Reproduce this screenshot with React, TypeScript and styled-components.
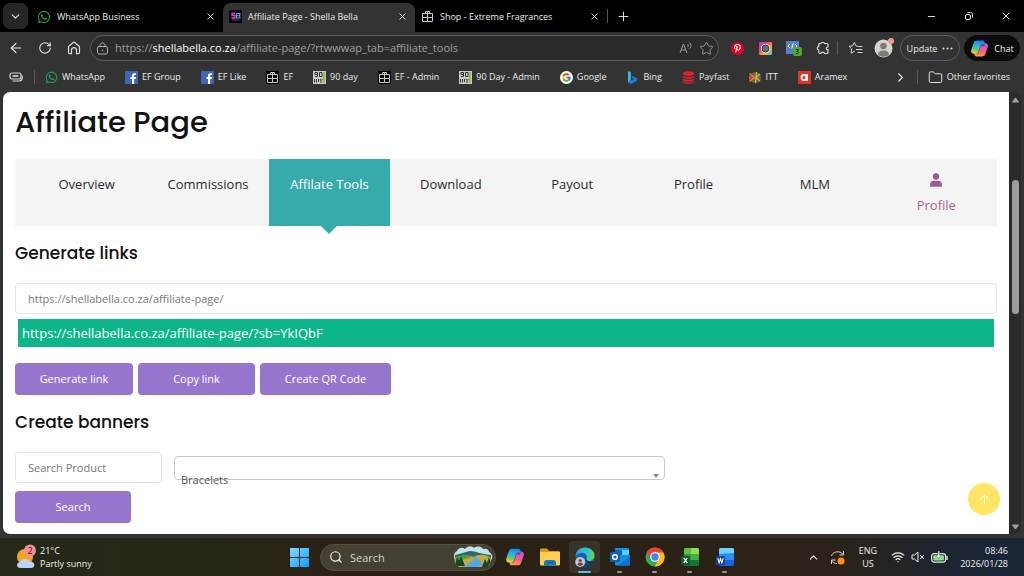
import React from 'react';
import styled, { createGlobalStyle, css } from 'styled-components';
import { FaWhatsapp, FaPinterestP } from 'react-icons/fa';
import { FcGoogle } from 'react-icons/fc';
import {
  ArrowLeft, ChevronDown, ChevronRight, ChevronUp, Minus, Plus,
  RotateCw, Search, Star, X, Folder, Wifi, ArrowUp,
} from 'lucide-react';

const ui = '"Open Sans", "Noto Sans", sans-serif';

const GlobalStyle = createGlobalStyle`
  * { box-sizing: border-box; }
  body { margin: 0; background: #333; font-family: ${ui}; }
  button, input, select { font-family: inherit; margin: 0; }
  h1, h2, p { margin: 0; }
  svg { display: block; flex: none; }
`;

/* ---------- browser chrome ---------- */

const Desktop = styled.div`
  min-height: 100vh;
  display: flex;
  flex-direction: column;
`;

const Browser = styled.div`
  flex: 1;
  display: flex;
  flex-direction: column;
  background: #333;
  color: #ececec;
  font-size: 9px;
`;

const IconButton = styled.button<{ $w?: number }>`
  display: flex;
  align-items: center;
  justify-content: center;
  flex: none;
  width: ${(p) => p.$w ?? 28}px;
  height: 26px;
  padding: 0;
  border: 0;
  background: none;
  color: inherit;
`;

const TabStrip = styled.div`
  display: flex;
  align-items: center;
  height: 32px;
  background: #000;
`;

const TabMenu = styled(IconButton)`
  margin: 0 3px;
  border-radius: 7px;
  background: #262626;
`;

const Tab = styled.div<{ $active?: boolean }>`
  display: flex;
  align-items: center;
  align-self: stretch;
  gap: 6px;
  width: 192px;
  margin-top: ${(p) => (p.$active ? 3 : 0)}px;
  padding: ${(p) => (p.$active ? 0 : 3)}px 0 2px 6px;
  border-radius: 8px 8px 0 0;
  background: ${(p) => (p.$active ? '#333' : 'transparent')};
`;

const TabTitle = styled.span`
  flex: 1;
  white-space: nowrap;
  line-height: 16px;
`;

const Spacer = styled.div`
  flex: 1;
`;

const Divider = styled.span<{ $before?: number }>`
  flex: none;
  width: 1px;
  height: 14px;
  margin-left: ${(p) => p.$before ?? 0}px;
  background: #5a5a5a;
`;

const Toolbar = styled.div`
  display: flex;
  align-items: center;
  height: 32px;
  padding: 0 4px 0 2px;
`;

const AddressBar = styled.div`
  flex: 1;
  display: flex;
  align-items: center;
  gap: 6px;
  height: 26px;
  margin-left: 2px;
  margin-right: 4px;
  padding: 0 4px 0 5px;
  border: 1px solid #5c5c5c;
  border-radius: 13px;
  background: #2b2b2b;
  color: #a0a0a0;
`;

const Url = styled.span`
  flex: 1;
  font-size: 11px;
  line-height: 16px;
  white-space: nowrap;
  b { font-weight: 400; color: #fff; }
`;

const Pill = styled.button<{ $dark?: boolean }>`
  display: flex;
  align-items: center;
  justify-content: center;
  gap: 5px;
  flex: none;
  width: ${(p) => (p.$dark ? 56 : 60)}px;
  height: 26px;
  margin-left: 4px;
  padding: 0;
  border: 1px solid ${(p) => (p.$dark ? '#0c0c0c' : '#5c5c5c')};
  border-radius: 13px;
  background: ${(p) => (p.$dark ? '#0c0c0c' : 'transparent')};
  color: #ececec;
  font-size: 9px;
`;

const Favorites = styled.nav`
  display: flex;
  align-items: center;
  height: 28px;
  padding: 0 14px 2px 9px;
`;

const FavoriteList = styled.div`
  display: flex;
  align-items: center;
  gap: 20px;
  margin-left: 10px;
`;

const Favorite = styled.a`
  display: flex;
  align-items: center;
  gap: 4px;
  color: inherit;
  text-decoration: none;
  white-space: nowrap;
  line-height: 16px;
`;

/* ---------- web page ---------- */

const Viewport = styled.div`
  flex: 1;
  display: flex;
  margin: 0 3px 4px;
  border-radius: 7px;
  overflow: hidden;
  background: #2b2b2b;
`;

const Page = styled.main`
  position: relative;
  flex: 1;
  padding: 9px 12px 11px;
  background: #fff;
  color: #111;
`;

const Scrollbar = styled.div`
  display: flex;
  flex-direction: column;
  align-items: center;
  width: 12px;
  padding: 5px 0 4px;
  color: #a0a0a0;
`;

const Thumb = styled.div`
  width: 7px;
  flex: 0 0 31%;
  margin: 77px 0 auto;
  border-radius: 4px;
  background: #9d9d9d;
`;

const Title = styled.h1`
  font: 500 29px/42px Poppins, Inter, sans-serif;
`;

const Heading = styled.h2`
  margin: 15px 0 18px;
  font: 500 17px/24px Poppins, Inter, sans-serif;
`;

const Menu = styled.nav`
  display: grid;
  grid-template-columns: repeat(8, 1fr);
  margin-top: 16px;
  padding-left: 11px;
  background: #f4f4f4;
`;

const MenuLink = styled.a<{ $active?: boolean; $accent?: boolean }>`
  position: relative;
  display: flex;
  flex-direction: column;
  align-items: center;
  height: 67px;
  padding-top: 15px;
  font-size: 13px;
  line-height: 20px;
  text-decoration: none;
  color: #2b2b2b;
  ${(p) => p.$accent && css`
    gap: 8px;
    padding-top: 14px;
    color: #a46497;
  `}
  ${(p) => p.$active && css`
    background: #37aaab;
    color: #fff;
    &::after {
      content: '';
      position: absolute;
      top: 100%;
      border: 8px solid transparent;
      border-top-color: #37aaab;
      border-bottom: 0;
    }
  `}
`;

const TextBox = styled.input<{ $short?: boolean }>`
  display: block;
  width: ${(p) => (p.$short ? '147px' : '100%')};
  height: 31px;
  padding: 0 12px 1px;
  border: 1px solid #e2e2e2;
  border-radius: 4px;
  background: #fff;
  color: #777;
  font-size: 11px;
  &::placeholder { color: #777; opacity: 1; }
`;

const LinkResult = styled.p`
  margin: 5px 3px 16px;
  padding: 0 4px;
  background: #0db688;
  color: #fff;
  font-size: 13px;
  line-height: 28px;
`;

const ButtonRow = styled.div`
  display: flex;
  gap: 5px;
`;

const Button = styled.button<{ $w: number }>`
  width: ${(p) => p.$w}px;
  height: 32px;
  padding: 0 0 2px;
  border: 0;
  border-radius: 4px;
  background: #9775ce;
  color: #fff;
  font-size: 11px;
`;

const FilterRow = styled.div`
  display: flex;
  align-items: center;
  gap: 12px;
  margin-bottom: 8px;
`;

const Picker = styled.div`
  position: relative;
  width: 50%;
  height: 24px;
  border: 1px solid #c8c8c8;
  border-radius: 4px;
  &::after {
    content: '';
    position: absolute;
    right: 5px;
    bottom: 1px;
    border: 3px solid transparent;
    border-top: 4px solid #888;
    border-bottom: 0;
  }
`;

const PickerSelect = styled.select`
  width: 100%;
  height: 30px;
  margin-top: 8px;
  padding: 0 6px;
  border: 0;
  appearance: none;
  background: transparent;
  color: #555;
  font-size: 11px;
`;

const ToTop = styled.button`
  position: absolute;
  right: 9px;
  bottom: 19px;
  display: flex;
  align-items: center;
  justify-content: center;
  width: 32px;
  height: 32px;
  padding: 0;
  border: 0;
  border-radius: 50%;
  background: #ffe565;
  color: #fff;
`;

/* ---------- taskbar ---------- */

const Taskbar = styled.footer`
  display: grid;
  grid-template-columns: 1fr auto 1fr;
  align-items: center;
  height: 38px;
  background: linear-gradient(90deg, #25291a 0%, #262616 22%, #2b2116 32%, #2a2216 72%, #2b231a 82%, #1b2534 94%, #1a2636 100%);
  color: #f0f0f0;
  font-size: 9px;
  line-height: 13px;
`;

const Group = styled.div<{ $end?: boolean }>`
  display: flex;
  align-items: center;
  gap: ${(p) => (p.$end ? 6 : 4)}px;
  padding: ${(p) => (p.$end ? '0 16px 0 0' : '0 0 0 16px')};
  justify-content: ${(p) => (p.$end ? 'flex-end' : 'flex-start')};
`;

const Apps = styled.div`
  display: flex;
  align-items: center;
`;

const Lines = styled.div<{ $align?: string; $w?: number }>`
  display: flex;
  flex-direction: column;
  width: ${(p) => (p.$w ? p.$w + 'px' : 'auto')};
  text-align: ${(p) => p.$align ?? 'left'};
  white-space: nowrap;
`;

const TrayButton = styled(IconButton)`
  margin-right: 3px;
`;

const AppButton = styled.button<{ $state?: 'open' | 'active' }>`
  position: relative;
  display: flex;
  align-items: center;
  justify-content: center;
  width: 31px;
  height: 32px;
  margin: 0 2px;
  padding: 0;
  border: 0;
  border-radius: 4px;
  background: ${(p) => (p.$state === 'active' ? '#3b3329' : 'transparent')};
  ${(p) => p.$state && css`
    &::after {
      content: '';
      position: absolute;
      bottom: 0;
      width: ${p.$state === 'active' ? 13 : 5}px;
      height: 2px;
      border-radius: 1px;
      background: ${p.$state === 'active' ? '#4cc2ff' : '#9a948b'};
    }
  `}
`;

const SearchBox = styled.label`
  display: flex;
  align-items: center;
  gap: 7px;
  width: 176px;
  height: 27px;
  margin: 0 1px 0 3px;
  padding: 0 2px 0 8px;
  border: 1px solid #55503f;
  border-radius: 14px;
  background: #454034;
  input {
    flex: 1;
    min-width: 0;
    padding: 0;
    border: 0;
    background: none;
    color: #d6d3cc;
    font-size: 11px;
  }
  input::placeholder { color: #d6d3cc; opacity: 1; }
`;

/* ---------- drawings ---------- */

const half = 'M9 2h7c1.300 0 2 .7 2.400 2l.6 2.500h-3c-1.500 0-2.300.9-2.800 2.400L11 15.500C10.400 17.300 9.300 18.500 7.400 18.500H4.300C2 18.500 1 16.500 1.500 14L4.500 5.500C5.200 3.300 6.500 2 9 2z';

const Copilot = ({ size, id }: { size: number; id: string }) => (
  <svg width={size} height={size} viewBox="0 0 24 24">
    <defs>
      <linearGradient id={`${id}a`} x1="0.6" y1="0" x2="0.300" y2="1">
        <stop offset="0" stopColor="#1f7cf0" /><stop offset=".4" stopColor="#22b5e0" />
        <stop offset=".7" stopColor="#5ecb6b" /><stop offset="1" stopColor="#f2d02c" />
      </linearGradient>
      <linearGradient id={`${id}b`} x1="0.4" y1="1" x2="0.7" y2="0">
        <stop offset="0" stopColor="#b45cf0" /><stop offset=".5" stopColor="#fb5a86" />
        <stop offset="1" stopColor="#ff9a3d" />
      </linearGradient>
    </defs>
    <path d={half} fill={`url(#${id}b)`} transform="rotate(180 12 12)" />
    <path d={half} fill={`url(#${id}a)`} />
    <path d="M16 6.500h3L18 9h-4l-3.500 9.500H7.400c1.900 0 3-1.200 3.600-3l2.200-6.600C13.700 7.400 14.500 6.500 16 6.500z" fill="#26262a" opacity=".55" />
  </svg>
);

const Facebook = () => (
  <svg width="13" height="13" viewBox="0 0 13 13">
    <rect width="13" height="13" fill="#4267b2" />
    <path d="M7 13V8H5.500V6H7V4.700C7 3 8 2.200 9.500 2.200h1.500v1.900h-1c-.7 0-.9.3-.9.9v1H11L10.700 8H9.100v5z" fill="#fff" />
  </svg>
);

const Gift = ({ dark }: { dark?: boolean }) => (
  <svg width="13" height="13" viewBox="0 0 13 13" fill="none" stroke="#c8c8c8">
    {dark && <rect width="13" height="13" fill="#000" stroke="none" />}
    <path d="M1.500 3.500h10v8h-10zM1.500 7.500h10M6.500 3.500v8" />
    <path d="M4.500 3.500v-2h4v2M6.500 1.500v2" />
  </svg>
);

const Ninety = () => (
  <svg width="13" height="13" viewBox="0 0 13 13">
    <rect width="13" height="13" fill="#c9ccc4" />
    <rect x="10" y="1" width="2" height="11" fill="#8cc152" />
    <g fill="none" stroke="#333">
      <path d="M2 5.500h2.500v-4H2v2h2M6.500 1.500H9v4H6.500z" />
      <path d="M1.500 8v3.500M3.500 8v3.500M5.500 8v3M7 8l1 1.500L9.500 8M8 9.500V12" />
    </g>
  </svg>
);

const Bing = () => (
  <svg width="13" height="13" viewBox="0 0 13 13">
    <path d="M2 0l2.800 1v8.200L2 11.500z" fill="#35b8f5" />
    <path d="M2 11.500l3-2 3-1.400-1.500-.8L5.300 4.500l5.700 2.700v2.600L4.800 13z" fill="#1f7bea" />
  </svg>
);

const Payfast = () => (
  <svg width="13" height="13" viewBox="0 0 13 13" fill="#e3202f">
    <ellipse cx="6.500" cy="2.600" rx="5.800" ry="2.300" />
    <path d="M.7 4.500c2 2 9.600 2 11.600 0v1.600c-2 2.400-9.600 2.400-11.600 0zM.7 7.300c2 2 9.600 2 11.600 0v1.600c-2 2.400-9.600 2.400-11.600 0zM.7 10c2 2 9.600 2 11.600 0v1c-2 2.400-9.600 2.400-11.600 0z" />
  </svg>
);

const Itt = () => (
  <svg width="12" height="13" viewBox="0 0 12 13">
    <circle cx="6.500" cy="6.500" r="5.500" fill="#66654f" />
    <path d="M.5 2.500l5 4-5 4" fill="none" stroke="#f0822e" strokeWidth="1.600" />
    <path d="M11 3L7 6.500 11 10M7.500 1l-1 11" fill="none" stroke="#d9bb3c" strokeWidth="1.200" />
    <path d="M0 4l3 2.500L0 9z" fill="#e0462e" />
  </svg>
);

const Aramex = () => (
  <svg width="13" height="13" viewBox="0 0 13 13">
    <rect width="13" height="13" fill="#e0342b" />
    <circle cx="6" cy="6.500" r="2.500" fill="none" stroke="#fff" strokeWidth="1.800" />
    <path d="M9 3v7" stroke="#fff" strokeWidth="1.800" />
  </svg>
);

const ShellaBella = () => (
  <svg width="13" height="13" viewBox="0 0 13 13">
    <rect width="13" height="13" fill="#0a0a14" />
    <path d="M6 3.500H3v2h3v2.500H2.500" fill="none" stroke="#d84bc0" strokeWidth="1.300" />
    <path d="M7.500 3.500H11l-.5 2 .5 2.500H7.500zM7.500 5.700h3" fill="none" stroke="#4a9fe0" strokeWidth="1.100" />
    <path d="M3 10h7" stroke="#6a3a3a" />
  </svg>
);

const Workspaces = () => (
  <svg width="14" height="12" viewBox="0 0 14 12" fill="none" stroke="#d8d8d8" strokeWidth="1.200">
    <rect x="1" y="2" width="11" height="6" rx="2" />
    <path d="M3.500 5h6" strokeWidth="1.600" />
    <path d="M13.200 4.500V7c0 2-1 3-3 3H3.500" />
  </svg>
);

const House = () => (
  <svg width="14" height="14" viewBox="0 0 14 14" fill="none" stroke="#dcdcdc" strokeWidth="1.200" strokeLinejoin="round">
    <path d="M1.500 6.200c0-.5.2-.9.600-1.200L6.200 1.500c.5-.4 1.100-.4 1.600 0L11.900 5c.4.3.6.7.6 1.200v5.300c0 .8-.4 1.200-1.200 1.200H9.500V9c0-3.300-5-3.300-5 0v3.700H2.700c-.8 0-1.200-.4-1.200-1.200z" />
  </svg>
);

const Lock = () => (
  <svg width="13" height="13" viewBox="0 0 13 13" fill="none" stroke="#b0b0b0">
    <rect x="1.500" y="4.500" width="10" height="7.500" rx="1.500" />
    <path d="M4 4.500V3.500c0-3.300 5-3.300 5 0v1" />
    <circle cx="6.500" cy="8.200" r=".8" fill="#b0b0b0" stroke="none" />
  </svg>
);

const Puzzle = () => (
  <svg width="14" height="14" viewBox="0 0 14 14" fill="none" stroke="#dcdcdc" strokeWidth="1.200" strokeLinejoin="round">
    <path d="M5 2.500C5.200.8 8.300.8 8.500 2.500H11c.6 0 1 .4 1 1V6c-2.300-.3-2.300 3 0 2.700v2.800c0 .6-.4 1-1 1H8.500c-.2-1.800-3.300-1.800-3.500 0H4c-.8 0-1.200-.4-1.200-1.200V9C.6 8.800.6 5.800 2.800 5.600V3.500c0-.6.400-1 1-1z" />
  </svg>
);

const ReadAloud = () => (
  <svg width="14" height="14" viewBox="0 0 14 14" fill="none" stroke="#a0a0a0">
    <path d="M1 12L4.500 3 8 12M2.200 9h4.600M8.500 3c1 1 1 2 0 3M10.500 1.500c2 2 2 4 0 6" />
  </svg>
);

const FavStar = () => (
  <svg width="15" height="14" viewBox="0 0 15 14" fill="none" stroke="#d8d8d8" strokeLinejoin="round" strokeLinecap="round">
    <path d="M9 5L8 4.800 6.300 1.500 4.600 4.800 1 5.300l2.700 2.600-.7 4.300 3.300-1.900M10 5.500h4M8.500 8.500H14M10 11.500h4" />
  </svg>
);

const Instagram = () => (
  <svg width="13" height="13" viewBox="0 0 13 13">
    <defs>
      <linearGradient id="insta" x1="0" y1="0" x2="1" y2="1">
        <stop offset="0" stopColor="#a53ff0" /><stop offset=".35" stopColor="#f03d6b" />
        <stop offset=".65" stopColor="#f9b233" /><stop offset="1" stopColor="#35c7f0" />
      </linearGradient>
    </defs>
    <rect width="13" height="13" rx="1" fill="url(#insta)" />
    <circle cx="6.500" cy="6.500" r="4.600" fill="#fff" />
    <circle cx="6.500" cy="6.500" r="3.500" fill="#5c7282" stroke="#29333b" />
  </svg>
);

const DevBadge = () => (
  <svg width="16" height="16" viewBox="0 0 16 16">
    <rect x="0" y="1" width="13" height="13" fill="#5b7fc7" />
    <path d="M4 4L2 6l2 2M9 4l2 2-2 2M7.200 3.500l-1.400 5" fill="none" stroke="#fff" />
    <rect x="7" y="7" width="9" height="9" rx="2" fill="#4fa82e" />
    <path d="M10 9.500h2.500L11 11.300c2.500 0 1.500 3-1 2.200" fill="none" stroke="#143d08" />
  </svg>
);

const Avatar = () => (
  <svg width="22" height="22" viewBox="0 0 22 22">
    <circle cx="10.500" cy="11.500" r="9" fill="#d6d3cf" />
    <circle cx="10.500" cy="9" r="3.300" fill="#7f7b78" />
    <path d="M5 17.500c0-5.500 11-5.500 11 0-2.500 3-8.500 3-11 0z" fill="#7f7b78" />
    <circle cx="18" cy="4" r="3" fill="#f7978f" />
  </svg>
);

const Restore = () => (
  <svg width="10" height="10" viewBox="0 0 10 10" fill="none" stroke="#eee">
    <rect x="1.500" y="3.500" width="5" height="5" rx="1.500" />
    <path d="M3.500 1.500h3c1.400 0 2 .6 2 2v3" />
  </svg>
);

const Person = () => (
  <svg width="12" height="14" viewBox="0 0 12 14" fill="#985a90">
    <circle cx="6" cy="3.500" r="3.200" />
    <path d="M0 12.300C0 9.300 1.500 7.800 3.500 7.800h5c2 0 3.500 1.500 3.500 4.500v.5c0 .5-.4.9-.9.9H.9c-.5 0-.9-.4-.9-.9z" />
  </svg>
);

const Triangle = ({ down }: { down?: boolean }) => (
  <svg width="7" height="6" viewBox="0 0 7 6" fill="currentColor">
    <path d={down ? 'M.8.500h5.400c.6 0 .8.5.5 1L4 5c-.3.4-.7.4-1 0L.3 1.500C0 1 .2.500.8.500z' : 'M.8 5.500h5.400c.6 0 .8-.5.5-1L4 1c-.3-.4-.7-.4-1 0L.3 4.500c-.3.500-.1 1 .5 1z'} />
  </svg>
);

const Weather = () => (
  <svg width="20" height="26" viewBox="0 0 20 26">
    <circle cx="9" cy="13" r="8" fill="#f5a31d" />
    <path d="M4.500 24C0 24 0 18.500 4 18.200 5 14 12 13.500 13.500 17.500 19.500 17.300 20 24 15 24z" fill="#b9d3fa" />
    <circle cx="14" cy="6.500" r="6" fill="#f98d95" />
    <text x="14" y="10" textAnchor="middle" fontSize="9" fill="#2b1515">2</text>
  </svg>
);

const Windows = () => (
  <svg width="19" height="19" viewBox="0 0 19 19">
    <defs>
      <linearGradient id="win" x1="0" y1="0" x2="1" y2="1">
        <stop offset="0" stopColor="#7fdcff" /><stop offset="1" stopColor="#109cf5" />
      </linearGradient>
    </defs>
    <path d="M0 0h9v9H0zM10 0h9v9h-9zM0 10h9v9H0zM10 10h9v9h-9z" fill="url(#win)" />
  </svg>
);

const Landscape = () => (
  <svg width="40" height="22" viewBox="0 0 40 22">
    <path d="M4 5c2-4 6-4 8-2 3-4 8-3 9-1 4-3 8-1 9 1 4-1 6 1 6 3 4 2 4 6 2 8 0 5-3 7-8 7H9c-5 0-8-3-7-7C0 11 1 6 4 5z" fill="#bfe3e8" />
    <path d="M2 9c6-1 9-3 15-4 6 0 10 3 21 4v5H2z" fill="#2d6a6c" />
    <path d="M2 12c8-4 14-3 18-1 6-3 12-3 18 1 1 5-2 9-8 9H9c-5 0-8-4-7-9z" fill="#c9a93a" />
    <path d="M3 12c6-4 12-3 15-1-4 2-9 2-15 5z" fill="#4e9a3f" />
    <path d="M24 10c-8 1 1 3-5 5-4 2-6 3-7 6h14c4-3 4-5 0-7-2-1-3-3-2-4z" fill="#55a9e0" />
    <path d="M2 19l2-8 2 4 2-5 4 10H5zM29 21l3-8 2 4 2-6 2 6-4 4z" fill="#17452c" />
  </svg>
);

const Explorer = () => (
  <svg width="20" height="18" viewBox="0 0 20 18">
    <path d="M0 2c0-1 .5-1.500 1.500-1.500H7L9 3h9.500c1 0 1.500.5 1.500 1.500V8H0z" fill="#d99a17" />
    <path d="M0 4h20v12c0 1-.5 1.500-1.500 1.500h-17C.5 17.500 0 17 0 16z" fill="#ffd04d" />
    <path d="M4 17.500v-3c0-1.500 1-2.500 2.500-2.500h7c1.500 0 2.500 1 2.500 2.500v3z" fill="#1779c9" />
    <path d="M7 14.500h6" stroke="#0b4f90" />
  </svg>
);

const Edge = () => (
  <svg width="20" height="20" viewBox="0 0 20 20">
    <defs>
      <linearGradient id="edgeTop" x1="0" y1="0.300" x2="1" y2="0.500">
        <stop offset="0" stopColor="#26a9e6" /><stop offset=".6" stopColor="#2fc4c9" /><stop offset="1" stopColor="#63d84e" />
      </linearGradient>
    </defs>
    <circle cx="10" cy="10" r="9.500" fill="#1260b5" />
    <path d="M.5 10C.5 4 5 .5 10 .5c6 0 9.500 4 9.500 8 0 3.500-2.500 5.500-5.500 5.500-2 0-3-.8-3-1.400 0-.6 1-1 1-2.600C12 7.500 9.500 6 7 6 3 6 .8 8.500.5 10z" fill="url(#edgeTop)" />
    <path d="M8 10c0 5 4 8 9.500 5.800C15.500 19 11 20.500 7 18.500 4 15 5 11 8 10z" fill="#0b3f85" />
    <path d="M11.500 12c.5 3 4 3.500 7.500 2l-1 2c-4 1-7-.5-7-3z" fill="#2a2216" />
    <circle cx="5.200" cy="15" r="5" fill="#c8c6c4" />
    <circle cx="5.200" cy="13.500" r="1.600" fill="#55514d" />
    <path d="M2.500 17.800c0-3 5.400-3 5.400 0-1.400 1.500-4 1.500-5.400 0z" fill="#55514d" />
  </svg>
);

const Outlook = () => (
  <svg width="20" height="20" viewBox="0 0 20 20">
    <rect x="5" y="1" width="14" height="9" rx="1" fill="#1490df" />
    <path d="M5 3h7v6H5z" fill="#0a63b8" /><path d="M12 3h7v5h-7z" fill="#4fd0fb" />
    <path d="M5 8h15v9c0 1-.5 1.500-1.500 1.500H6.500C5.500 18.500 5 18 5 17z" fill="#1a8fe3" />
    <path d="M20 9L8 18.500h10.500c1 0 1.500-.5 1.500-1.500z" fill="#1272cc" />
    <rect y="5" width="10" height="10" rx="1" fill="#0f5fb5" />
    <circle cx="5" cy="10" r="2.300" fill="none" stroke="#fff" strokeWidth="1.500" />
  </svg>
);

const Chrome = () => (
  <svg width="20" height="20" viewBox="0 0 20 20">
    <circle cx="10" cy="10" r="9.500" fill="#34a853" />
    <path d="M10 10L1.800 5.200A9.500 9.500 0 0 1 18.200 5.200L18.200 5.500H10z" fill="#ea4335" />
    <path d="M10 5.500h8.400A9.500 9.500 0 0 1 9.600 19.500L14 12z" fill="#fbbc05" />
    <path d="M1.800 5.200L6 12.500 10 10z" fill="#ea4335" />
    <circle cx="10" cy="10" r="4.800" fill="#fff" />
    <circle cx="10" cy="10" r="3.700" fill="#4285f4" />
  </svg>
);

const Excel = () => (
  <svg width="18" height="20" viewBox="0 0 18 20">
    <rect x="3" y="1" width="15" height="18" rx="2" fill="#2d9c3f" />
    <path d="M10 1h6c1.500 0 2 .5 2 2v4h-8z" fill="#8edb57" />
    <path d="M3 3c0-1.500.5-2 2-2h5v6H3z" fill="#5cc04a" /><path d="M10 7h8v6h-8z" fill="#45ad44" />
    <path d="M3 13h15v4c0 1.500-.5 2-2 2H5c-1.500 0-2-.5-2-2z" fill="#1a7436" />
    <rect y="9" width="9" height="9" rx="1.500" fill="#0d5a2b" />
    <path d="M2.800 11l3.400 5M6.200 11l-3.400 5" stroke="#fff" strokeWidth="1.300" />
  </svg>
);

const Word = () => (
  <svg width="18" height="20" viewBox="0 0 18 20">
    <rect x="3" y="1" width="15" height="18" rx="2" fill="#1565e0" />
    <path d="M5 1h11c1.500 0 2 .5 2 2v5H3V3c0-1.500.5-2 2-2z" fill="#6bd0fb" />
    <path d="M3 7c5 0 9-1 15-1v7H3z" fill="#2a8df5" />
    <rect y="9" width="9" height="9" rx="1.500" fill="#153fb0" />
    <path d="M1.800 11.200l1.300 4.500 1.400-4 1.400 4 1.300-4.500" fill="none" stroke="#fff" strokeWidth="1.100" />
  </svg>
);

const Sync = () => (
  <svg width="15" height="15" viewBox="0 0 15 15" fill="none" stroke="#d8d8d8">
    <path d="M1.500 6C2.500 1.500 10 0 13 4.500M13.500 1v4h-4M1.500 14v-4h4M2 10.500c1 2 2.500 3 5 3" />
    <circle cx="11" cy="11" r="3.500" fill="#ff8f0e" stroke="none" />
  </svg>
);

const Muted = () => (
  <svg width="14" height="14" viewBox="0 0 14 14" fill="none" stroke="#ececec" strokeLinejoin="round">
    <path d="M1 5h2.500L7 2v10L3.500 9H1zM9 5l4 4M13 5L9 9" />
  </svg>
);

const Battery = () => (
  <svg width="17" height="13" viewBox="0 0 17 13">
    <rect x=".6" y="2.600" width="14" height="8.500" rx="2.500" fill="#333" stroke="#d8e8d8" strokeWidth="1.200" />
    <rect x="2.300" y="4.300" width="10.600" height="5.200" rx="1" fill="#8fdc92" />
    <path d="M16 5v4" stroke="#d8e8d8" strokeWidth="1.500" />
    <path d="M7 0h1.500v4h2L7.700 7.500 5 4h2z" fill="#fff" stroke="#263" strokeWidth=".5" />
  </svg>
);

/* ---------- data ---------- */

const green = '#1fa855';

const favorites: [string, React.ReactNode][] = [
  ['WhatsApp', <FaWhatsapp size={13} color={green} />],
  ['EF Group', <Facebook />],
  ['EF Like', <Facebook />],
  ['EF', <Gift dark />],
  ['90 day', <Ninety />],
  ['EF - Admin', <Gift dark />],
  ['90 Day - Admin', <Ninety />],
  ['Google', <svg width="13" height="13" viewBox="0 0 13 13"><circle cx="6.500" cy="6.500" r="6.500" fill="#fff" /><FcGoogle x="1.500" y="1.500" size={10} /></svg>],
  ['Bing', <Bing />],
  ['Payfast', <Payfast />],
  ['ITT', <Itt />],
  ['Aramex', <Aramex />],
];

const menu = ['Overview', 'Commissions', 'Affilate Tools', 'Download', 'Payout', 'Profile', 'MLM'];

const tabs: { title: string; icon: React.ReactNode; active?: boolean }[] = [
  { title: 'WhatsApp Business', icon: <FaWhatsapp size={14} color={green} /> },
  { title: 'Affiliate Page - Shella Bella', icon: <ShellaBella />, active: true },
  { title: 'Shop - Extreme Fragrances', icon: <Gift /> },
];

const apps: { name: string; icon: React.ReactNode; state?: 'open' | 'active' }[] = [
  { name: 'Copilot', icon: <Copilot size={20} id="task" /> },
  { name: 'File Explorer', icon: <Explorer /> },
  { name: 'Edge', icon: <Edge />, state: 'active' },
  { name: 'Outlook', icon: <Outlook />, state: 'open' },
  { name: 'Chrome', icon: <Chrome />, state: 'open' },
  { name: 'Excel', icon: <Excel />, state: 'open' },
  { name: 'Word', icon: <Word />, state: 'open' },
];

export default function App() {
  return (
    <Desktop>
      <GlobalStyle />
      <Browser>
        <TabStrip>
          <TabMenu $w={25} aria-label="Tab actions"><ChevronDown size={13} /></TabMenu>
          {tabs.map((t) => (
            <Tab key={t.title} $active={t.active}>
              {t.icon}
              <TabTitle>{t.title}</TabTitle>
              <IconButton $w={26} aria-label="Close tab"><X size={11} /></IconButton>
            </Tab>
          ))}
          <Divider />
          <IconButton $w={30} aria-label="New tab"><Plus size={15} strokeWidth={1.5} /></IconButton>
          <Spacer />
          <IconButton $w={37} aria-label="Minimize"><Minus size={11} /></IconButton>
          <IconButton $w={37} aria-label="Restore"><Restore /></IconButton>
          <IconButton $w={37} aria-label="Close"><X size={12} /></IconButton>
        </TabStrip>

        <Toolbar>
          <IconButton aria-label="Back"><ArrowLeft size={16} strokeWidth={1.75} /></IconButton>
          <IconButton $w={29} aria-label="Refresh"><RotateCw size={14} strokeWidth={1.75} /></IconButton>
          <IconButton $w={29} aria-label="Home"><House /></IconButton>
          <AddressBar>
            <Lock />
            <Url>https://<b>shellabella.co.za</b>/affiliate-page/?rtwwwap_tab=affiliate_tools</Url>
            <ReadAloud />
            <Star size={15} strokeWidth={1.5} />
          </AddressBar>
          <IconButton aria-label="Pinterest">
            <svg width="13" height="13" viewBox="0 0 13 13">
              <circle cx="6.500" cy="6.500" r="6.500" fill="#e60023" />
              <FaPinterestP x="2" y="2" size={9} color="#fff" />
            </svg>
          </IconButton>
          <IconButton aria-label="Instagram"><Instagram /></IconButton>
          <IconButton $w={30} aria-label="Developer extension"><DevBadge /></IconButton>
          <IconButton aria-label="Extensions"><Puzzle /></IconButton>
          <Divider />
          <IconButton $w={34} aria-label="Favorites"><FavStar /></IconButton>
          <IconButton $w={24} aria-label="Account"><Avatar /></IconButton>
          <Pill>
            Update
            <svg width="11" height="3" viewBox="0 0 11 3" fill="#e4e4e4">
              <circle cx="1.500" cy="1.500" r="1" /><circle cx="5.500" cy="1.500" r="1" /><circle cx="9.500" cy="1.500" r="1" />
            </svg>
          </Pill>
          <Pill $dark><Copilot size={19} id="chat" />Chat</Pill>
        </Toolbar>

        <Favorites>
          <Workspaces />
          <Divider $before={11} />
          <FavoriteList>
            {favorites.map(([name, icon]) => (
              <Favorite key={name} href="#">{icon}{name}</Favorite>
            ))}
          </FavoriteList>
          <Spacer />
          <IconButton $w={32} aria-label="More favorites"><ChevronRight size={15} strokeWidth={1.75} /></IconButton>
          <Divider />
          <FavoriteList>
            <Favorite href="#"><Folder size={15} strokeWidth={1.5} />Other favorites</Favorite>
          </FavoriteList>
        </Favorites>

        <Viewport>
          <Page>
            <Title>Affiliate Page</Title>
            <Menu>
              {menu.map((m) => (
                <MenuLink key={m} href="#" $active={m === 'Affilate Tools'}>{m}</MenuLink>
              ))}
              <MenuLink href="#" $accent>
                <Person />
                Profile
              </MenuLink>
            </Menu>

            <Heading>Generate links</Heading>
            <TextBox aria-label="Page link" defaultValue="https://shellabella.co.za/affiliate-page/" />
            <LinkResult>https://shellabella.co.za/affiliate-page/?sb=YkIQbF</LinkResult>
            <ButtonRow>
              <Button $w={118}>Generate link</Button>
              <Button $w={117}>Copy link</Button>
              <Button $w={131}>Create QR Code</Button>
            </ButtonRow>

            <Heading>Create banners</Heading>
            <FilterRow>
              <TextBox $short aria-label="Search product" placeholder="Search Product" />
              <Picker>
                <PickerSelect aria-label="Category" defaultValue="Bracelets">
                  <option>Bracelets</option>
                </PickerSelect>
              </Picker>
            </FilterRow>
            <Button $w={116}>Search</Button>
            <ToTop aria-label="Back to top"><ArrowUp size={15} strokeWidth={1.5} /></ToTop>
          </Page>
          <Scrollbar>
            <Triangle />
            <Thumb />
            <Triangle down />
          </Scrollbar>
        </Viewport>
      </Browser>

      <Taskbar>
        <Group>
          <Weather />
          <Lines><span>21°C</span><span>Partly sunny</span></Lines>
        </Group>
        <Apps>
          <AppButton aria-label="Start"><Windows /></AppButton>
          <SearchBox>
            <Search size={14} />
            <input aria-label="Search" placeholder="Search" />
            <Landscape />
          </SearchBox>
          {apps.map((a) => (
            <AppButton key={a.name} aria-label={a.name} $state={a.state}>{a.icon}</AppButton>
          ))}
        </Apps>
        <Group $end>
          <TrayButton $w={16} aria-label="Hidden icons"><ChevronUp size={13} /></TrayButton>
          <Sync />
          <Lines $align="center" $w={34}><span>ENG</span><span>US</span></Lines>
          <Wifi size={14} />
          <Muted />
          <Battery />
          <Lines $align="right" $w={54}><span>08:46</span><span>2026/01/28</span></Lines>
        </Group>
      </Taskbar>
    </Desktop>
  );
}
